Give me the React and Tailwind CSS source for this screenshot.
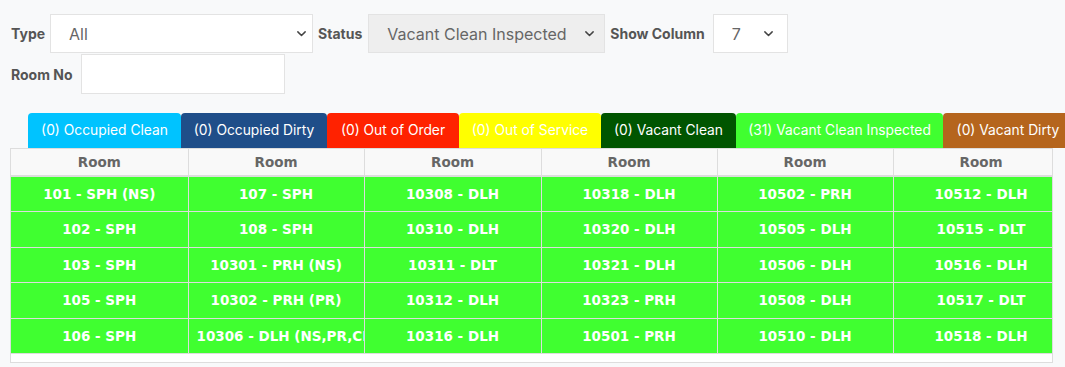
import React from "react";

const Chevron = () => (
  <svg width="13" height="13" viewBox="0 0 16 16" fill="none" stroke="#444" strokeWidth="1.8" strokeLinecap="round" strokeLinejoin="round">
    <path d="M3.5 6l4.5 4.5L12.5 6" />
  </svg>
);

const legend = [
  { label: "(0) Occupied Clean", cls: "bg-[#00c3ff] w-[153px]" },
  { label: "(0) Occupied Dirty", cls: "bg-[#1f4e89] w-[146px]" },
  { label: "(0) Out of Order", cls: "bg-[#ff2200] w-[132px]" },
  { label: "(0) Out of Service", cls: "bg-[#ffff00] w-[142px]" },
  { label: "(0) Vacant Clean", cls: "bg-[#005500] w-[135px]" },
  { label: "(31) Vacant Clean Inspected", cls: "bg-[#40ff30] w-[207px]" },
  { label: "(0) Vacant Dirty", cls: "bg-[#b5651d] w-[130px]" },
];

const rows = [
  ["101 - SPH (NS)", "107 - SPH", "10308 - DLH", "10318 - DLH", "10502 - PRH", "10512 - DLH"],
  ["102 - SPH", "108 - SPH", "10310 - DLH", "10320 - DLH", "10505 - DLH", "10515 - DLT"],
  ["103 - SPH", "10301 - PRH (NS)", "10311 - DLT", "10321 - DLH", "10506 - DLH", "10516 - DLH"],
  ["105 - SPH", "10302 - PRH (PR)", "10312 - DLH", "10323 - PRH", "10508 - DLH", "10517 - DLT"],
  ["106 - SPH", "10306 - DLH (NS,PR,CI)", "10316 - DLH", "10501 - PRH", "10510 - DLH", "10518 - DLH"],
];

export default function App() {
  return (
    <div className="w-[1065px] h-[367px] overflow-hidden bg-[#f8f9fa] font-['Inter',sans-serif]">
      <div className="pl-[11px] pt-[14px]">
        <div className="flex items-center h-[39px]">
          <span className="text-[14px] font-bold text-[#555] mr-[5px]">Type</span>
          <div className="w-[263px] h-[39px] bg-white border border-[#e3e3e3] flex items-center justify-between pl-[18px] pr-[4px] text-[16px] text-[#666]">
            <span>All</span>
            <Chevron />
          </div>
          <span className="text-[14px] font-bold text-[#555] ml-[5px] mr-[6px]">Status</span>
          <div className="w-[237px] h-[39px] bg-[#eeeeee] border border-[#e3e3e3] flex items-center justify-between pl-[18px] pr-[8px] text-[16px] text-[#666]">
            <span>Vacant Clean Inspected</span>
            <Chevron />
          </div>
          <span className="text-[14px] font-bold text-[#555] ml-[5px] mr-[8px]">Show Column</span>
          <div className="w-[75px] h-[39px] bg-white border border-[#e3e3e3] flex items-center justify-between pl-[18px] pr-[12px] text-[16px] text-[#666]">
            <span>7</span>
            <Chevron />
          </div>
        </div>
        <div className="flex items-center h-[40px] mt-[1px]">
          <span className="text-[14px] font-bold text-[#555] mr-[8px]">Room No</span>
          <div className="w-[204px] h-[40px] bg-white border border-[#e3e3e3]" />
        </div>
      </div>

      <div className="flex whitespace-nowrap mt-[19px] pl-[28px] overflow-hidden">
        {legend.map((l) => (
          <div
            key={l.label}
            className={`${l.cls} shrink-0 h-[35px] rounded-t-[4px] flex items-center justify-center text-white text-[13.8px]`}
          >
            {l.label}
          </div>
        ))}
      </div>

      <div className="ml-[10px] w-[1043px] border border-[#dddddd] bg-white pb-[8px] overflow-hidden">
        <table className="table-fixed border-collapse w-[1058px] font-['DejaVu_Sans',Verdana,sans-serif] text-[13.5px] font-bold">
          <colgroup>
            <col className="w-[177px]" />
            <col className="w-[176px]" />
            <col className="w-[177px]" />
            <col className="w-[176px]" />
            <col className="w-[176px]" />
            <col className="w-[176px]" />
          </colgroup>
          <thead>
            <tr className="h-[27px] bg-[#f9f9f9]">
              {Array.from({ length: 6 }).map((_, i) => (
                <th
                  key={i}
                  className="border-r border-b-2 border-[#dddddd] text-[#666] font-bold text-center px-2"
                >
                  Room
                </th>
              ))}
            </tr>
          </thead>
          <tbody>
            {rows.map((r, ri) => (
              <tr key={ri} className="h-[35.5px] bg-[#40ff30]">
                {r.map((c, ci) => (
                  <td
                    key={ci}
                    className="border-r border-b border-[#dddddd] text-white text-center px-2 overflow-hidden whitespace-nowrap"
                  >
                    {c}
                  </td>
                ))}
              </tr>
            ))}
          </tbody>
        </table>
      </div>
    </div>
  );
}
